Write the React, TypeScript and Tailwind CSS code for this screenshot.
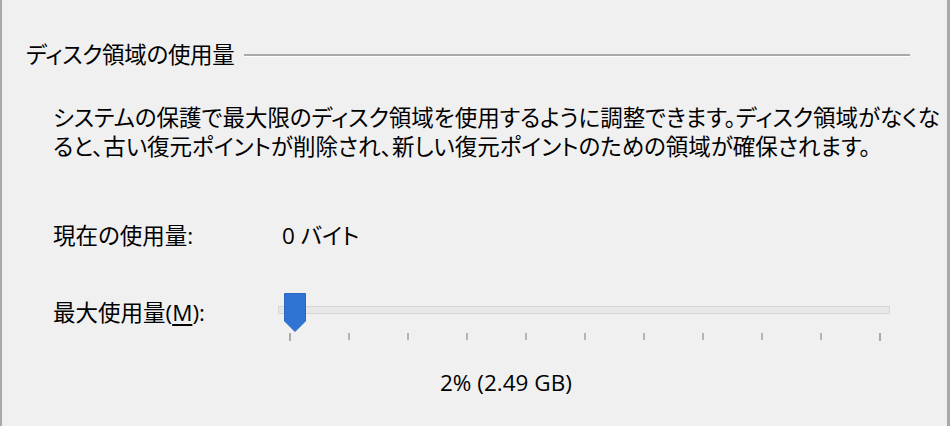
const font = "font-['Open_Sans','Noto_Sans_CJK_JP',sans-serif] [font-feature-settings:'palt']";

function Slider() {
  const ticks = Array.from({ length: 11 }, (_, i) => i);
  return (
    <div className="relative w-[612px] h-[48px]">
      {/* track */}
      <div className="absolute left-0 right-0 top-[13px] h-[8px] border border-[#d6d6d6] bg-[#e7e7e7]" />
      {/* thumb */}
      <svg className="absolute left-[6px] top-0" width="22" height="39" viewBox="0 0 22 39">
        <path d="M0.5 0.5 H21.5 V28 L11 38.5 L0.5 28 Z" fill="#2f74d2" stroke="#2a68c0" strokeWidth="1" />
      </svg>
      {/* ticks */}
      <div className="absolute left-[11px] w-[592px] top-[40px] flex justify-between items-start">
        {ticks.map((t) => (
          <div
            key={t}
            className={t === 0 || t === 10 ? "w-[2px] h-[8px] bg-[#a9a9a9]" : "w-[2px] h-[7px] bg-[#b4b4b4]"}
          />
        ))}
      </div>
    </div>
  );
}

export default function App() {
  return (
    <div className={`w-[950px] h-[426px] overflow-hidden bg-[#f0f0f0] border-l-2 border-r-[3px] border-[#a9a9a9] text-black text-[22.5px] leading-[30px] ${font}`}>
      <div className="flex items-center pt-[40px] pl-[24px] pr-[37px]">
        <span className="whitespace-nowrap tracking-[-0.3px]">ディスク領域の使用量</span>
        <div className="flex-1 ml-[10px] h-[3px] border-t-2 border-[#a9a9a9] border-b border-b-white" />
      </div>

      <p className="mt-[33px] pl-[51px] leading-[29px] whitespace-nowrap">
        システムの保護で最大限のディスク領域を使用するように調整できます。ディスク領域がなくな
        <br />
        ると、古い復元ポイントが削除され、新しい復元ポイントのための領域が確保されます。
      </p>

      <div className="mt-[60px] pl-[51px] flex">
        <span className="w-[229px]">現在の使用量:</span>
        <span>0 バイト</span>
      </div>

      <div className="mt-[42px] pl-[51px] flex items-start">
        <span className="w-[225px] mt-[5px]">
          最大使用量(<span className="underline underline-offset-[3px]">M</span>):
        </span>
        <Slider />
      </div>

      <div className="mt-[27px] pl-[438px]">2% (2.49 GB)</div>
    </div>
  );
}
